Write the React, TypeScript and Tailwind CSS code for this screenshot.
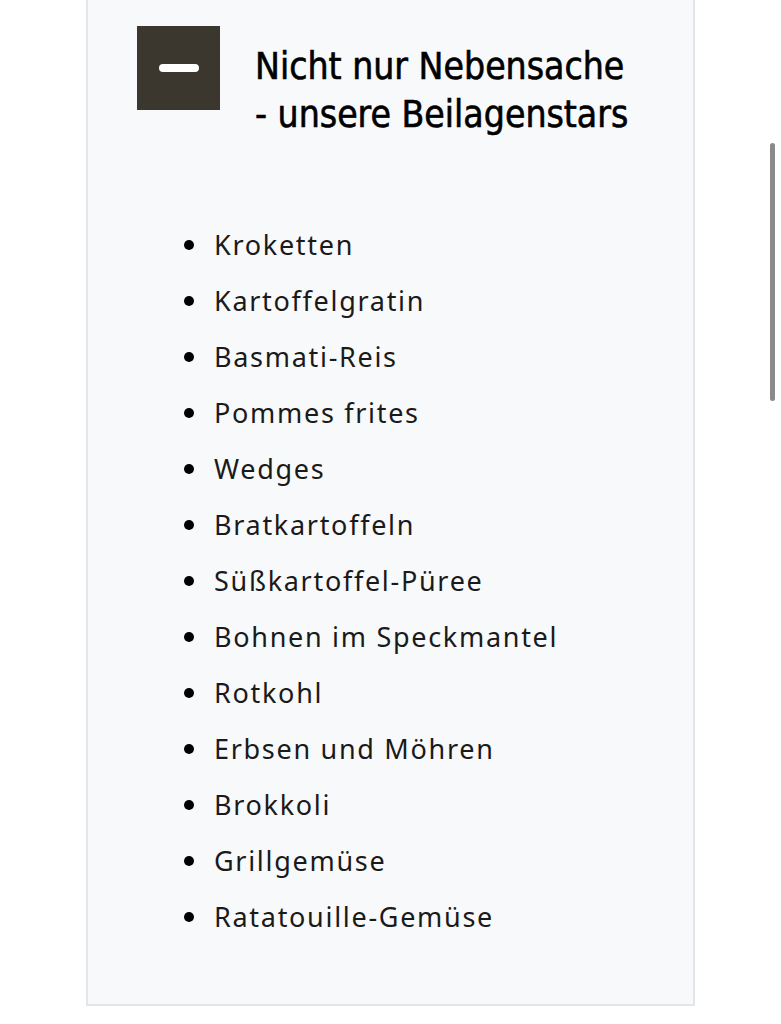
const items = [
  "Kroketten",
  "Kartoffelgratin",
  "Basmati-Reis",
  "Pommes frites",
  "Wedges",
  "Bratkartoffeln",
  "Süßkartoffel-Püree",
  "Bohnen im Speckmantel",
  "Rotkohl",
  "Erbsen und Möhren",
  "Brokkoli",
  "Grillgemüse",
  "Ratatouille-Gemüse",
];

export default function App() {
  return (
    <div className="relative w-[781px] h-[1024px] bg-white overflow-hidden">
      <div className="ml-[86px] w-[609px] h-[1006px] bg-[#f8f9fb] border-x-2 border-b-2 border-[#e3e5e9]">
        <div className="flex pl-[49px] pt-[26px]">
          <button className="w-[83px] h-[84px] bg-[#3b362e] flex items-center justify-center shrink-0">
            <span className="block w-[40px] h-[8px] rounded-full bg-white" />
          </button>
          <h2
            className="ml-[35px] mt-[17px] text-[37px] leading-[48px] text-black [-webkit-text-stroke:0.6px_black]"
            style={{ fontFamily: '"Liberation Sans Narrow", "DejaVu Sans Condensed", Roboto, sans-serif' }}
          >
            Nicht nur Nebensache
            <br />- unsere Beilagenstars
          </h2>
        </div>
        <ul
          className="mt-[78px] pl-[96px] text-[27px] leading-[56px] text-[#1a1a1a] tracking-[1.7px]"
          style={{ fontFamily: '"Noto Sans", Lato, sans-serif' }}
        >
          {items.map((item) => (
            <li key={item} className="flex items-center">
              <span className="w-[10px] h-[10px] rounded-full bg-black mr-[20px] shrink-0" />
              <span>{item}</span>
            </li>
          ))}
        </ul>
      </div>
      <div className="absolute left-[770px] top-[143px] w-[5px] h-[258px] rounded-full bg-[#8a8a8a]" />
    </div>
  );
}
